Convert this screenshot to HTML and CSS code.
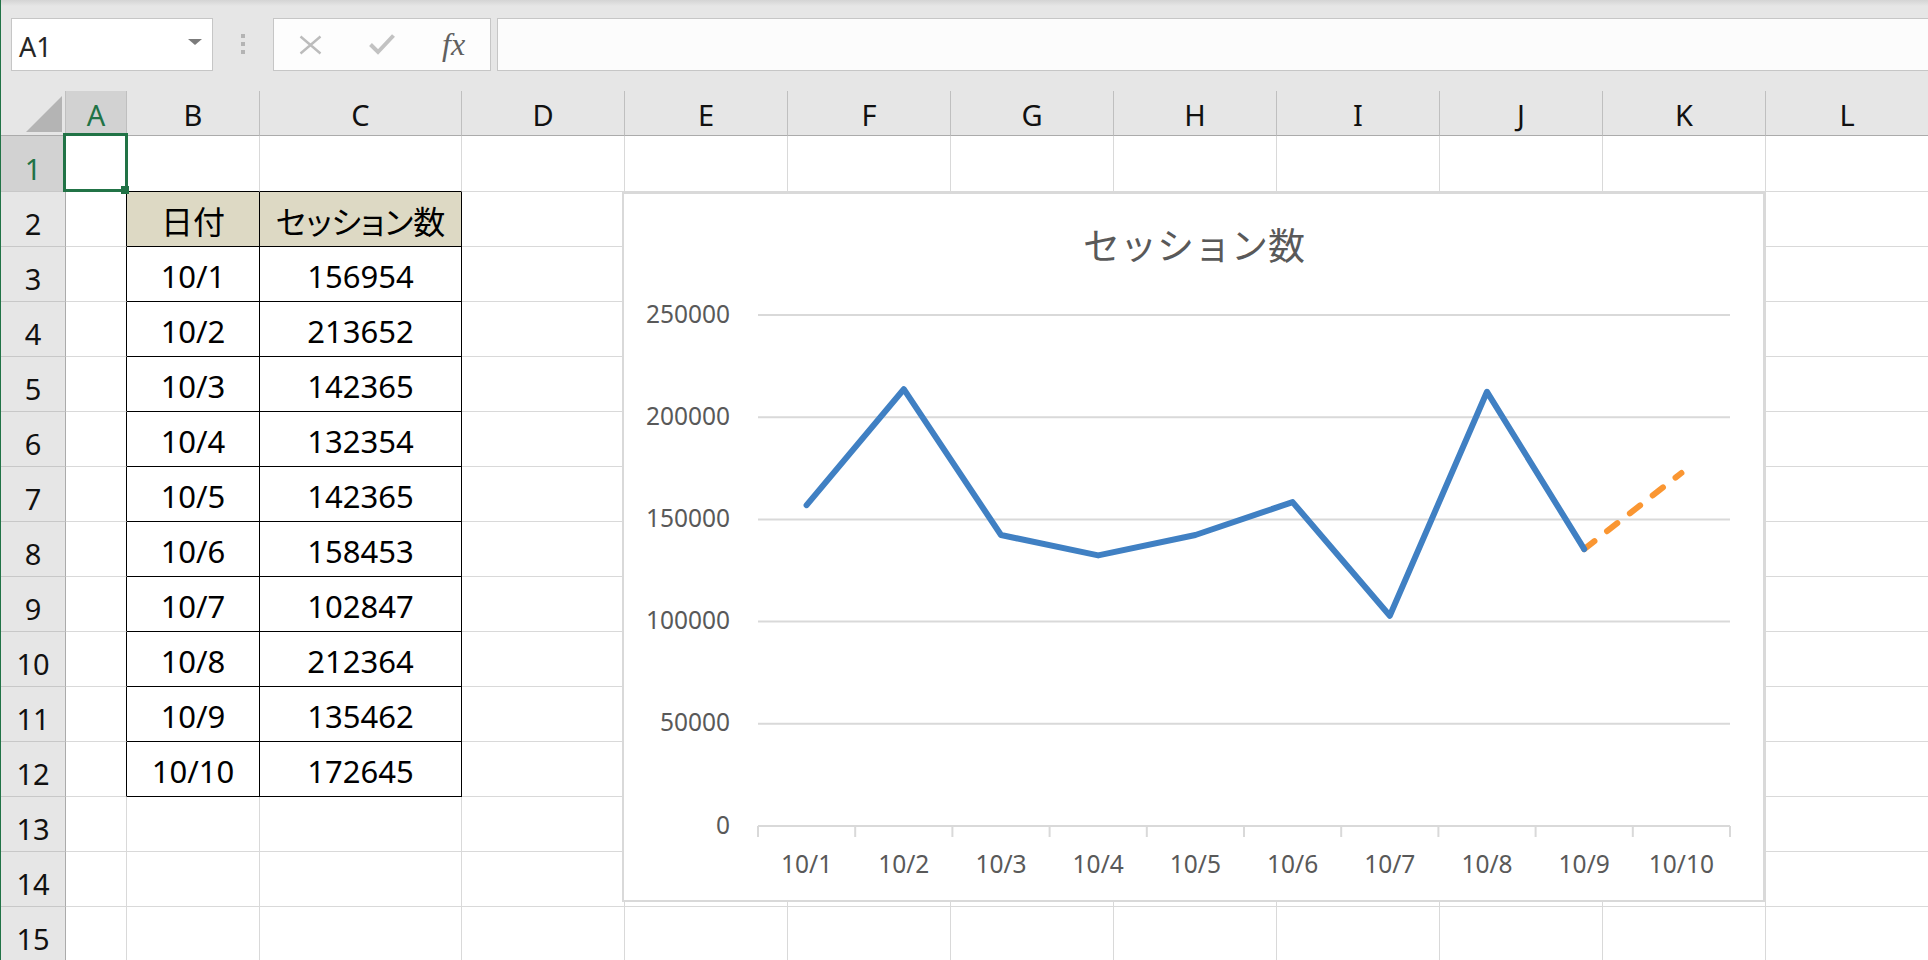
FILE: index.html
```html
<!DOCTYPE html>
<html lang="ja">
<head>
<meta charset="utf-8">
<title>Book1 - Excel</title>
<link rel="stylesheet" href="styles.css">
</head>
<body>
<div class="app">
  <div class="formula-bar">
    <div class="name-box"><span class="ref">A1</span><span class="caret"></span></div>
    <div class="grip"><i></i><i></i><i></i></div>
    <div class="fx-box">
      <svg class="icon-cancel" width="23" height="20" viewBox="0 0 23 20"><path d="M1.5 1.5 L21.5 18.5 M21.5 1.5 L1.5 18.5" stroke="#bcbcbc" stroke-width="2.4" fill="none"/></svg>
      <svg class="icon-enter" width="26" height="21" viewBox="0 0 26 21"><path d="M1.5 10.5 L9 18 L24.5 1.5" stroke="#c2c2c2" stroke-width="4" fill="none"/></svg>
      <span class="fx">fx</span>
    </div>
    <div class="formula-input"></div>
  </div>

  <div class="sheet">
    <!-- column headers -->
    <div class="cell corner"></div>
    <div class="cell col-head is-active">A</div>
    <div class="cell col-head">B</div>
    <div class="cell col-head">C</div>
    <div class="cell col-head">D</div>
    <div class="cell col-head">E</div>
    <div class="cell col-head">F</div>
    <div class="cell col-head">G</div>
    <div class="cell col-head">H</div>
    <div class="cell col-head">I</div>
    <div class="cell col-head">J</div>
    <div class="cell col-head">K</div>
    <div class="cell col-head">L</div>

    <!-- row 1 -->
    <div class="cell row-head is-active">1</div>
    <div class="cell"></div>
    <div class="cell edge-top"></div>
    <div class="cell edge-top"></div>
    <div class="cell"></div><div class="cell"></div><div class="cell"></div><div class="cell"></div><div class="cell"></div><div class="cell"></div><div class="cell"></div><div class="cell"></div><div class="cell"></div>

    <!-- row 2 -->
    <div class="cell row-head">2</div>
    <div class="cell edge-left"></div>
    <div class="cell boxed label">日付</div>
    <div class="cell boxed label">セッション数</div>
    <div class="cell"></div><div class="cell"></div><div class="cell"></div><div class="cell"></div><div class="cell"></div><div class="cell"></div><div class="cell"></div><div class="cell"></div><div class="cell"></div>

    <!-- row 3 -->
    <div class="cell row-head">3</div>
    <div class="cell edge-left"></div>
    <div class="cell boxed">10/1</div>
    <div class="cell boxed">156954</div>
    <div class="cell"></div><div class="cell"></div><div class="cell"></div><div class="cell"></div><div class="cell"></div><div class="cell"></div><div class="cell"></div><div class="cell"></div><div class="cell"></div>

    <!-- row 4 -->
    <div class="cell row-head">4</div>
    <div class="cell edge-left"></div>
    <div class="cell boxed">10/2</div>
    <div class="cell boxed">213652</div>
    <div class="cell"></div><div class="cell"></div><div class="cell"></div><div class="cell"></div><div class="cell"></div><div class="cell"></div><div class="cell"></div><div class="cell"></div><div class="cell"></div>

    <!-- row 5 -->
    <div class="cell row-head">5</div>
    <div class="cell edge-left"></div>
    <div class="cell boxed">10/3</div>
    <div class="cell boxed">142365</div>
    <div class="cell"></div><div class="cell"></div><div class="cell"></div><div class="cell"></div><div class="cell"></div><div class="cell"></div><div class="cell"></div><div class="cell"></div><div class="cell"></div>

    <!-- row 6 -->
    <div class="cell row-head">6</div>
    <div class="cell edge-left"></div>
    <div class="cell boxed">10/4</div>
    <div class="cell boxed">132354</div>
    <div class="cell"></div><div class="cell"></div><div class="cell"></div><div class="cell"></div><div class="cell"></div><div class="cell"></div><div class="cell"></div><div class="cell"></div><div class="cell"></div>

    <!-- row 7 -->
    <div class="cell row-head">7</div>
    <div class="cell edge-left"></div>
    <div class="cell boxed">10/5</div>
    <div class="cell boxed">142365</div>
    <div class="cell"></div><div class="cell"></div><div class="cell"></div><div class="cell"></div><div class="cell"></div><div class="cell"></div><div class="cell"></div><div class="cell"></div><div class="cell"></div>

    <!-- row 8 -->
    <div class="cell row-head">8</div>
    <div class="cell edge-left"></div>
    <div class="cell boxed">10/6</div>
    <div class="cell boxed">158453</div>
    <div class="cell"></div><div class="cell"></div><div class="cell"></div><div class="cell"></div><div class="cell"></div><div class="cell"></div><div class="cell"></div><div class="cell"></div><div class="cell"></div>

    <!-- row 9 -->
    <div class="cell row-head">9</div>
    <div class="cell edge-left"></div>
    <div class="cell boxed">10/7</div>
    <div class="cell boxed">102847</div>
    <div class="cell"></div><div class="cell"></div><div class="cell"></div><div class="cell"></div><div class="cell"></div><div class="cell"></div><div class="cell"></div><div class="cell"></div><div class="cell"></div>

    <!-- row 10 -->
    <div class="cell row-head">10</div>
    <div class="cell edge-left"></div>
    <div class="cell boxed">10/8</div>
    <div class="cell boxed">212364</div>
    <div class="cell"></div><div class="cell"></div><div class="cell"></div><div class="cell"></div><div class="cell"></div><div class="cell"></div><div class="cell"></div><div class="cell"></div><div class="cell"></div>

    <!-- row 11 -->
    <div class="cell row-head">11</div>
    <div class="cell edge-left"></div>
    <div class="cell boxed">10/9</div>
    <div class="cell boxed">135462</div>
    <div class="cell"></div><div class="cell"></div><div class="cell"></div><div class="cell"></div><div class="cell"></div><div class="cell"></div><div class="cell"></div><div class="cell"></div><div class="cell"></div>

    <!-- row 12 -->
    <div class="cell row-head">12</div>
    <div class="cell edge-left"></div>
    <div class="cell boxed">10/10</div>
    <div class="cell boxed">172645</div>
    <div class="cell"></div><div class="cell"></div><div class="cell"></div><div class="cell"></div><div class="cell"></div><div class="cell"></div><div class="cell"></div><div class="cell"></div><div class="cell"></div>

    <!-- row 13 -->
    <div class="cell row-head">13</div>
    <div class="cell"></div><div class="cell"></div><div class="cell"></div><div class="cell"></div><div class="cell"></div><div class="cell"></div><div class="cell"></div><div class="cell"></div><div class="cell"></div><div class="cell"></div><div class="cell"></div><div class="cell"></div>

    <!-- row 14 -->
    <div class="cell row-head">14</div>
    <div class="cell"></div><div class="cell"></div><div class="cell"></div><div class="cell"></div><div class="cell"></div><div class="cell"></div><div class="cell"></div><div class="cell"></div><div class="cell"></div><div class="cell"></div><div class="cell"></div><div class="cell"></div>

    <!-- row 15 -->
    <div class="cell row-head">15</div>
    <div class="cell"></div><div class="cell"></div><div class="cell"></div><div class="cell"></div><div class="cell"></div><div class="cell"></div><div class="cell"></div><div class="cell"></div><div class="cell"></div><div class="cell"></div><div class="cell"></div><div class="cell"></div>

    <!-- active cell frame with fill handle -->
    <div class="selection"></div>
    <div class="fill-handle"></div>

    <!-- embedded line chart -->
    <div class="chart">
      <svg width="1143" height="710" viewBox="0 0 1143 710">
        <rect x="1" y="1" width="1141" height="708" fill="#fff" stroke="#d9d9d9" stroke-width="2"/>
        <text class="chart-title" x="572" y="68" text-anchor="middle">セッション数</text>

        <g stroke="#d9d9d9" stroke-width="2">
          <line x1="136" x2="1108" y1="123" y2="123"/>
          <line x1="136" x2="1108" y1="225.2" y2="225.2"/>
          <line x1="136" x2="1108" y1="327.4" y2="327.4"/>
          <line x1="136" x2="1108" y1="429.6" y2="429.6"/>
          <line x1="136" x2="1108" y1="531.8" y2="531.8"/>
          <line x1="136" x2="1108" y1="634" y2="634"/>
          <line x1="136" x2="136" y1="634" y2="645"/>
          <line x1="233.2" x2="233.2" y1="634" y2="645"/>
          <line x1="330.4" x2="330.4" y1="634" y2="645"/>
          <line x1="427.6" x2="427.6" y1="634" y2="645"/>
          <line x1="524.8" x2="524.8" y1="634" y2="645"/>
          <line x1="622" x2="622" y1="634" y2="645"/>
          <line x1="719.2" x2="719.2" y1="634" y2="645"/>
          <line x1="816.4" x2="816.4" y1="634" y2="645"/>
          <line x1="913.6" x2="913.6" y1="634" y2="645"/>
          <line x1="1010.8" x2="1010.8" y1="634" y2="645"/>
          <line x1="1108" x2="1108" y1="634" y2="645"/>
        </g>

        <g class="axis-label" text-anchor="end">
          <text x="108" y="130.5">250000</text>
          <text x="108" y="232.7">200000</text>
          <text x="108" y="334.9">150000</text>
          <text x="108" y="437.1">100000</text>
          <text x="108" y="539.3">50000</text>
          <text x="108" y="641.5">0</text>
        </g>

        <g class="axis-label" text-anchor="middle">
          <text x="184.6" y="681">10/1</text>
          <text x="281.8" y="681">10/2</text>
          <text x="379" y="681">10/3</text>
          <text x="476.2" y="681">10/4</text>
          <text x="573.4" y="681">10/5</text>
          <text x="670.6" y="681">10/6</text>
          <text x="767.8" y="681">10/7</text>
          <text x="865" y="681">10/8</text>
          <text x="962.2" y="681">10/9</text>
          <text x="1059.4" y="681">10/10</text>
        </g>

        <path d="M962.2 357.1 L1059.4 281" fill="none" stroke="#fa9632" stroke-width="6" stroke-linecap="round" stroke-dasharray="13 16"/>
        <polyline points="184.6,313.1 281.8,197.2 379,343 476.2,363.4 573.4,343 670.6,310.1 767.8,423.7 865,199.8 962.2,357.1" fill="none" stroke="#4080c3" stroke-width="6" stroke-linejoin="round" stroke-linecap="round"/>
      </svg>
    </div>
  </div>
</div>
</body>
</html>
```

FILE: styles.css
```css
* {
  box-sizing: border-box;
}

html,
body {
  margin: 0;
  padding: 0;
}

body {
  width: 1928px;
  height: 960px;
  overflow: hidden;
  background: #ffffff;
  font-family: "Noto Sans", "Noto Sans CJK JP", sans-serif;
  color: #000;
}

.app {
  height: 960px;
  border-left: 1px solid #217346;
  overflow: hidden;
}

/* ---- formula bar ---- */
.formula-bar {
  height: 91px;
  display: flex;
  align-items: flex-start;
  padding: 18px 0 0 10px;
  background: linear-gradient(#d4d4d4, #e6e6e6 6px);
}

.name-box {
  width: 202px;
  height: 53px;
  flex: none;
  border: 1px solid #c6c6c6;
  background: #ffffff;
  display: flex;
  align-items: center;
  justify-content: space-between;
  padding: 0 10px 0 7px;
}

.name-box .ref {
  font-size: 27px;
  color: #262626;
  padding-top: 3px;
}

.name-box .caret {
  width: 0;
  height: 0;
  border-left: 7px solid transparent;
  border-right: 7px solid transparent;
  border-top: 6px solid #7b7b7b;
  margin-bottom: 5px;
}

.grip {
  display: flex;
  flex-direction: column;
  gap: 4px;
  margin: 16px 0 0 28px;
  flex: none;
}

.grip i {
  display: block;
  width: 4px;
  height: 4px;
  background: #b4b4b4;
}

.fx-box {
  width: 218px;
  height: 53px;
  flex: none;
  margin-left: 28px;
  border: 1px solid #c6c6c6;
  background: #fdfdfd;
  display: flex;
  align-items: center;
  padding-left: 25px;
}

.icon-cancel {
  flex: none;
}

.icon-enter {
  flex: none;
  margin-left: 47px;
}

.fx {
  margin-left: 47px;
  font-family: "Liberation Serif", serif;
  font-style: italic;
  font-size: 32px;
  color: #606060;
  line-height: 1;
  padding-bottom: 2px;
}

.formula-input {
  flex: 1;
  height: 53px;
  margin-left: 6px;
  margin-right: -2px;
  border: 1px solid #c6c6c6;
  background: #fcfcfc;
}

/* ---- worksheet grid ---- */
.sheet {
  position: relative;
  display: grid;
  grid-template-columns: 65px 61px 133px 202px repeat(9, 163px);
  grid-template-rows: 45px 56px repeat(14, 55px);
}

.cell {
  border-right: 1px solid #d9d9d9;
  border-bottom: 1px solid #d9d9d9;
  background: #ffffff;
  display: flex;
  align-items: center;
  justify-content: center;
  font-size: 31px;
  padding-top: 3px;
  white-space: nowrap;
}

.col-head {
  background: #e6e6e6;
  border-right-color: #bfbfbf;
  border-bottom-color: #ababab;
  font-size: 29px;
  color: #111;
  padding-top: 3px;
}

.row-head {
  background: #e6e6e6;
  border-right-color: #ababab;
  border-bottom-color: #c8c8c8;
  font-size: 29px;
  color: #111;
  padding-top: 9px;
}

.is-active {
  background: #d2d2d2;
  color: #217346;
}

.corner {
  position: relative;
  background: #e6e6e6;
  border-right-color: #c0c0c0;
  border-bottom-color: #ababab;
}

.corner::after {
  content: "";
  position: absolute;
  right: 3px;
  bottom: 3px;
  width: 36px;
  height: 36px;
  background: #b4b4b4;
  clip-path: polygon(100% 0, 100% 100%, 0 100%);
}

/* data table B2:C12 */
.boxed {
  border-right-color: #000;
  border-bottom-color: #000;
}

.edge-left {
  border-right-color: #000;
}

.edge-top {
  border-bottom-color: #000;
}

.label {
  background: #ddd9c4;
  font-size: 32px;
  font-feature-settings: "palt";
  padding-top: 2px;
}

/* active cell */
.selection {
  position: absolute;
  left: 62px;
  top: 42px;
  width: 65px;
  height: 59px;
  border: 3px solid #217346;
  pointer-events: none;
}

.fill-handle {
  position: absolute;
  left: 120px;
  top: 95px;
  width: 8px;
  height: 8px;
  background: #217346;
}

/* ---- chart object ---- */
.chart {
  position: absolute;
  left: 621px;
  top: 101px;
  width: 1143px;
  height: 710px;
}

.chart svg {
  display: block;
}

.chart-title {
  font-family: "Noto Sans CJK JP", sans-serif;
  font-size: 37px;
  fill: #595959;
}

.axis-label {
  font-family: "Noto Sans", sans-serif;
  font-size: 24.5px;
  fill: #595959;
}
```
